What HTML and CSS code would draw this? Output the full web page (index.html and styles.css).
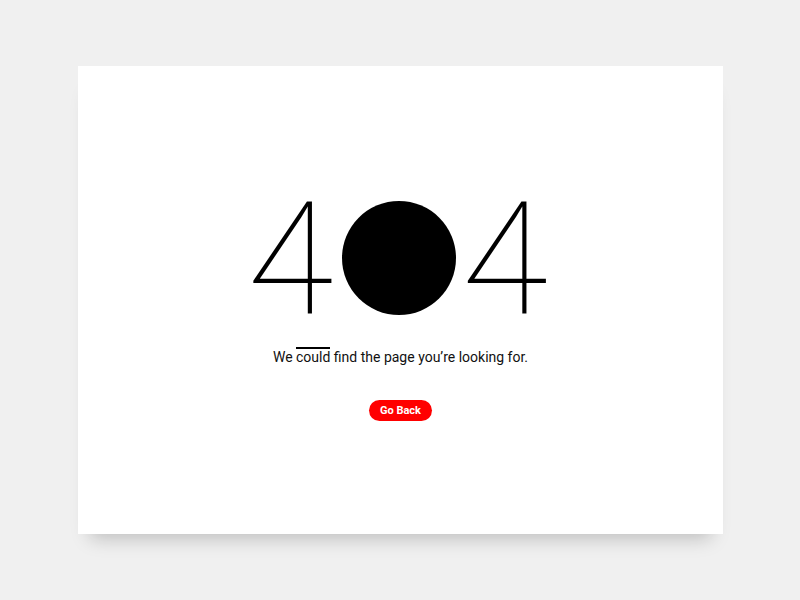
FILE: index.html
```html
<!DOCTYPE html>
<html lang="en">
<head>
<meta charset="utf-8">
<title>404</title>
<link rel="stylesheet" href="styles.css">
</head>
<body>
<main class="card">
  <div class="code">
    <span class="digit left">4</span>
    <span class="zero" aria-label="0"></span>
    <span class="digit right">4</span>
  </div>
  <p class="message">We <span class="struck">could</span> find the page you’re looking for.</p>
  <a class="back" href="#">Go Back</a>
</main>
</body>
</html>
```
FILE: styles.css
```css
html, body {
  margin: 0;
  padding: 0;
}
body {
  background: #f0f0f0;
  width: 800px;
  height: 600px;
  overflow: hidden;
  font-family: Roboto, "Liberation Sans", sans-serif;
  padding: 66px 0 0 78px;
  box-sizing: border-box;
}
.card {
  width: 645px;
  height: 468px;
  background: #fff;
  box-shadow: 0 16px 18px -12px rgba(0,0,0,0.22);
  display: flex;
  flex-direction: column;
  align-items: center;
  box-sizing: border-box;
  padding-top: 134px;
}
.code {
  display: flex;
  align-items: center;
  height: 115px;
  position: relative;
  left: -3px;
}
.digit {
  font-family: Roboto, sans-serif;
  font-weight: 100;
  font-size: 158px;
  line-height: 115px;
  color: #000;
  position: relative;
  top: 3px;
}
.left {
  margin-right: 8px;
}
.right {
  margin-left: 6px;
}
.zero {
  width: 114px;
  height: 114px;
  border-radius: 50%;
  background: #000;
}
.message {
  margin: 32px 0 0;
  font-size: 14px;
  line-height: 20px;
  color: #111;
}
.struck {
  position: relative;
}
.struck::before {
  content: "";
  position: absolute;
  left: 0;
  right: 0;
  top: -2px;
  height: 2px;
  background: #000;
}
.back {
  margin-top: 33px;
  background: #ff0000;
  color: #fff;
  font-weight: 700;
  font-size: 11px;
  text-decoration: none;
  height: 21px;
  line-height: 21px;
  padding: 0 11px;
  border-radius: 11px;
}
```
